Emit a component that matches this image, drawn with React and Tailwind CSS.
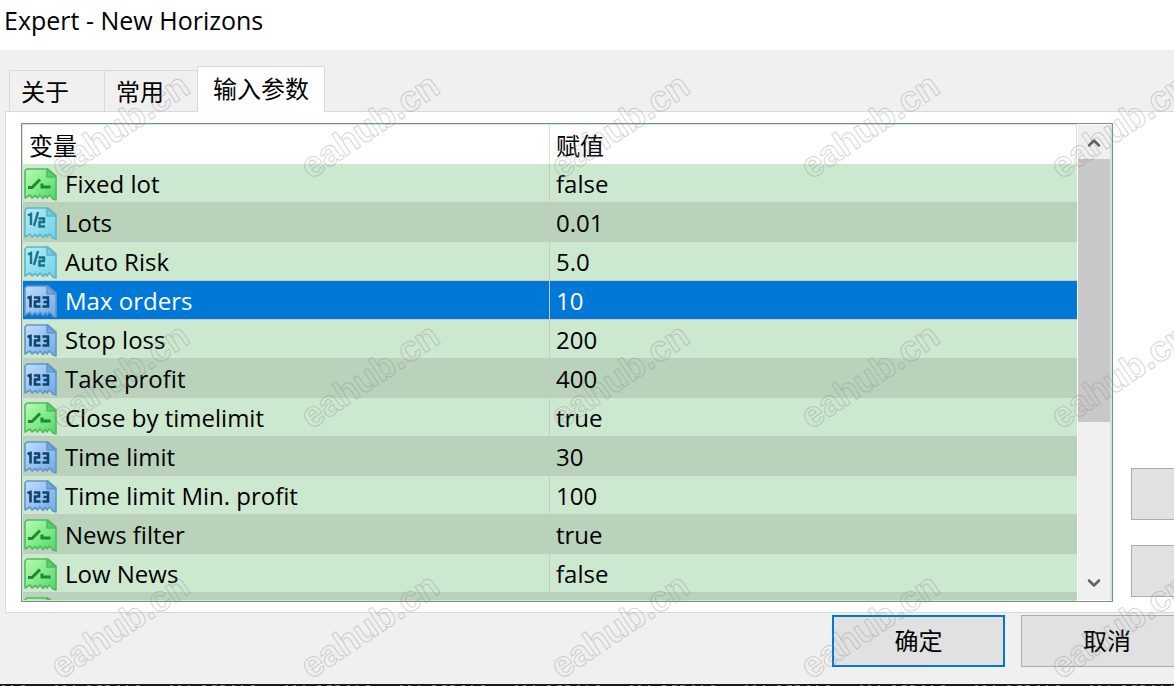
import { ChevronDown, ChevronUp } from "lucide-react";

const rows = [
  { name: "Fixed lot", value: "false", type: "bool" },
  { name: "Lots", value: "0.01", type: "double" },
  { name: "Auto Risk", value: "5.0", type: "double" },
  { name: "Max orders", value: "10", type: "int" },
  { name: "Stop loss", value: "200", type: "int" },
  { name: "Take profit", value: "400", type: "int" },
  { name: "Close by timelimit", value: "true", type: "bool" },
  { name: "Time limit", value: "30", type: "int" },
  { name: "Time limit Min. profit", value: "100", type: "int" },
  { name: "News filter", value: "true", type: "bool" },
  { name: "Low News", value: "false", type: "bool" },
  { name: "", value: "", type: "bool" },
];

const selected = 3;

const palettes = {
  bool: { from: "#b9fcb4", to: "#4fd866", edge: "#55b860", ink: "#1d8a2c" },
  double: { from: "#b5edf8", to: "#6fd0e8", edge: "#62b3c6", ink: "#1c7183" },
  int: { from: "#c3defb", to: "#6ba9e6", edge: "#6595c8", ink: "#12436f" },
};

const TypeIcon = ({ type }) => {
  const { from, to, edge, ink } = palettes[type];
  return (
    <svg viewBox="0 0 34 34" className="block h-[34px] w-[34px] shrink-0" aria-hidden="true">
      <defs>
        <linearGradient id={`paper-${type}`} x1="0" y1="0" x2="1" y2="1">
          <stop offset="0" stopColor={from} />
          <stop offset="1" stopColor={to} />
        </linearGradient>
      </defs>
      <path
        d="M4 2H25L33 9V33L30 32L28.5 30L26 28L24 31L22 28.500L20 31.500L17 28L14.500 31L12.500 28.500L9 31L7 28L2 31V4Z"
        fill={`url(#paper-${type})`}
        stroke={edge}
        strokeWidth="1.6"
        strokeLinejoin="round"
      />
      <path d="M24 2V10H32.500Z" fill={to} stroke={edge} strokeWidth="1.5" strokeLinejoin="round" />
      {type === "bool" && (
        <g fill="none" stroke={ink}>
          <path d="M5 20.500H9L17 12.500" strokeWidth="3" />
          <path d="M19 16.500V20H27.500" strokeWidth="3" />
        </g>
      )}
      {type === "double" && (
        <g fill="none" stroke={ink} strokeWidth="2.400">
          <path d="M5 9.500L8 8V19M15 6L11 20" />
          <path d="M15.500 12.500H21V16H16.500V20.500H22" />
        </g>
      )}
      {type === "int" && (
        <g fill="none" stroke={ink} strokeWidth="2.600">
          <path d="M4.500 14L7.500 13V23.500" />
          <path d="M11 13.500H16V17.500H12V22.500H17.500" />
          <path d="M19.500 13.500H25V22.500H19.500M20.500 18H25" />
        </g>
      )}
    </svg>
  );
};

const rowColor = (i) => {
  if (i === selected) return "bg-[#0078d7] text-white";
  return i % 2 ? "bg-[#b8d3ba]" : "bg-[#cce8cf]";
};

const Tab = ({ label, active }) => (
  <button
    role="tab"
    aria-selected={!!active}
    className={
      active
        ? "-mb-px h-[46px] border border-b-0 border-[#d9d9d9] bg-white px-[15px] pb-0.5"
        : "h-[41px] border border-r-0 border-b-0 border-[#d9d9d9] bg-[#f0f0f0] pt-0.5 pl-[11px] pr-[35px] last:pr-[33px]"
    }
  >
    {label}
  </button>
);

const ParamsTable = () => (
  <div className="flex h-[479px] min-w-0 flex-1 border border-[#7f8c88] bg-white">
    <div className="min-w-0 flex-1 overflow-hidden border border-r-0 border-[#cce8cf]">
      <table className="w-full table-fixed border-separate border-spacing-0">
        <thead>
          <tr className="h-[39px] text-left">
            <th className="w-[527px] border-r border-[#e0e0e0] p-0 pt-0.5 pl-1.5 font-normal">变量</th>
            <th className="border-r border-[#e0e0e0] p-0 pt-0.5 pl-1.5 font-normal">赋值</th>
          </tr>
        </thead>
        <tbody>
          {rows.map((row, i) => (
            <tr key={i} className={`h-[39px] ${rowColor(i)}`}>
              <td className="border-r border-b border-[#c6c8c6] p-0 pt-0.5">
                <div className="flex items-center gap-2">
                  <TypeIcon type={row.type} />
                  {row.name}
                </div>
              </td>
              <td className="border-b border-[#c6c8c6] p-0 pt-0.5 pl-1.5">{row.value}</td>
            </tr>
          ))}
        </tbody>
      </table>
    </div>
    <div className="flex w-[35px] flex-col border border-r-2 border-white border-r-[#cce8cf] bg-[#f0f0f0]">
      <button aria-label="Scroll up" className="flex h-[34px] items-center justify-center pt-0.5">
        <ChevronUp className="h-5 w-5 text-[#606060]" strokeWidth={3} />
      </button>
      <div className="h-[263px] bg-[#c8c8c8]" />
      <button aria-label="Scroll down" className="mt-auto flex h-[34px] items-center justify-center">
        <ChevronDown className="h-5 w-5 text-[#606060]" strokeWidth={3} />
      </button>
    </div>
  </div>
);

const Watermark = () => (
  <svg className="pointer-events-none absolute inset-0 h-full w-full" aria-hidden="true">
    {[180, 430, 680].map((y) =>
      [61, 311, 561, 811, 1061].map((x) => (
        <text
          key={`${x}-${y}`}
          transform={`translate(${x} ${y}) rotate(-34)`}
          className="fill-none stroke-[#808080]/35 font-['Liberation_Sans'] text-[36px] font-bold"
        >
          eahub.cn
        </text>
      ))
    )}
  </svg>
);

export default function App() {
  return (
    <div className="relative flex min-h-screen flex-col overflow-hidden bg-[#f0f0f0] font-['Open_Sans','Noto_Sans_CJK_SC',sans-serif] text-2xl text-black">
      <header className="flex h-[50px] items-center bg-white pb-2 pl-1">
        <h1 className="text-[25px]">Expert - New Horizons</h1>
      </header>

      <main className="pt-4 pl-[5px]">
        <div role="tablist" className="flex items-end pl-1">
          <div className="flex">
            <Tab label="关于" />
            <Tab label="常用" />
          </div>
          <Tab label="输入参数" active />
        </div>

        <section className="flex gap-[18px] border border-r-0 border-[#d9d9d9] bg-white pt-[11px] pb-2.5 pl-[15px]">
          <ParamsTable />
          <div className="flex w-[43px] flex-col justify-end gap-[25px] pb-[5px]">
            <button aria-label="Load" className="h-[52px] border border-r-0 border-[#adadad] bg-[#e1e1e1]" />
            <button aria-label="Save" className="h-[52px] border border-r-0 border-[#adadad] bg-[#e1e1e1]" />
          </div>
        </section>
      </main>

      <footer className="flex justify-end gap-4 pt-0.5">
        <button className="h-[52px] w-[173px] border-2 border-[#0078d7] bg-[#e1e1e1]">确定</button>
        <button className="h-[52px] w-[153px] border border-r-0 border-[#adadad] bg-[#e1e1e1] pl-[18px]">取消</button>
      </footer>

      {/* sliver of the chart's time axis under the dialog */}
      <svg className="mt-auto block h-0.5 w-full bg-[#1b1819]" aria-hidden="true">
        <line
          x1="2"
          y1="1.5"
          x2="100%"
          y2="1.5"
          stroke="#77716f"
          strokeDasharray="3 6 2 8 4 30 3 5 3 7 2 12 4 6 5 3 5 7"
        />
      </svg>
      <Watermark />
    </div>
  );
}
